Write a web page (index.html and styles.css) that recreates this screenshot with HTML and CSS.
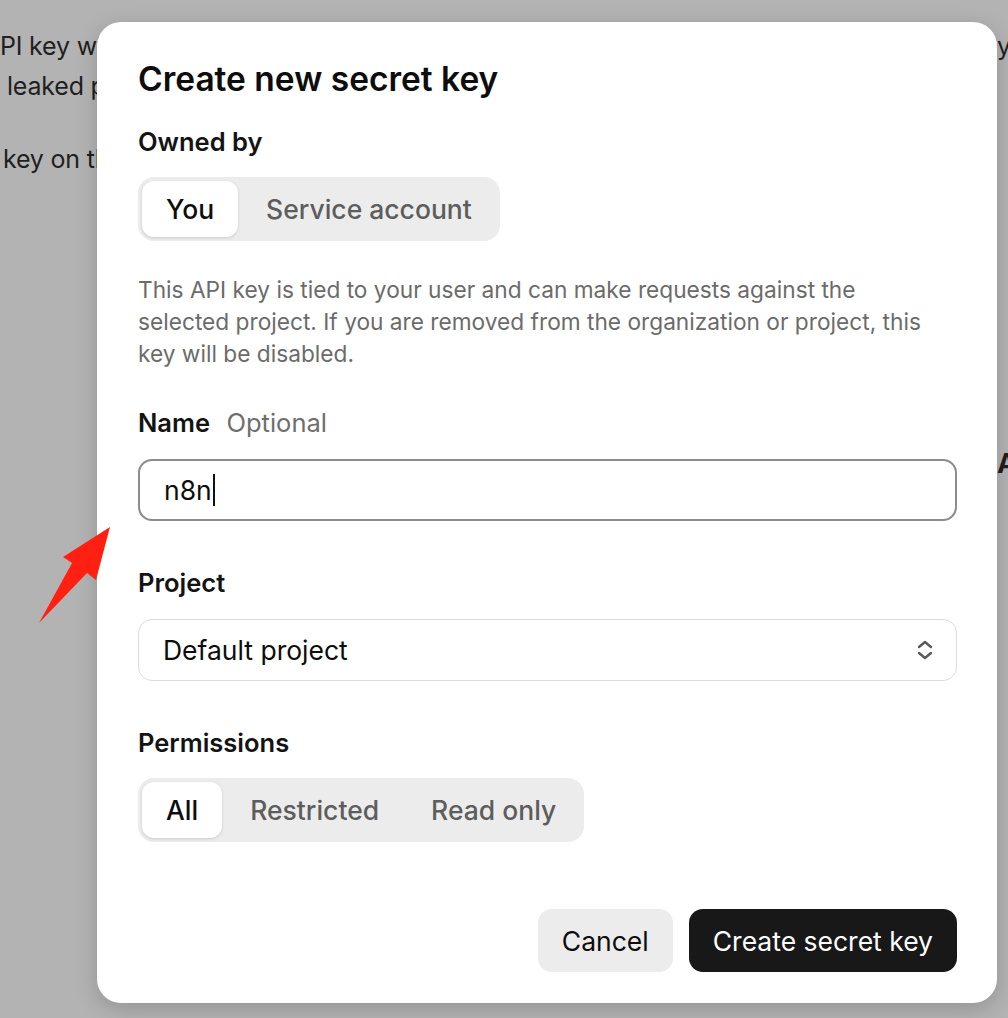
FILE: index.html
```html
<!DOCTYPE html>
<html lang="en">
<head>
    <meta charset="UTF-8">
    <meta name="viewport" content="width=device-width, initial-scale=1.0">
    <title>Create new secret key</title>
    <link rel="stylesheet" href="styles.css">
</head>
<body>
    <div class="page">
        <div class="page-left">
            <p>PI key will be shown only once</p>
            <p class="indent">leaked please revoke it</p>
            <p class="gap indent-sm">key on this page</p>
        </div>
        <div class="page-right">
            <p>y</p>
            <p class="heading">A</p>
        </div>
    </div>

    <div class="modal">
        <h2>Create new secret key</h2>

        <div class="label first">Owned by</div>
        <div class="segment">
            <button class="active">You</button>
            <button>Service account</button>
        </div>

        <p class="hint">This API key is tied to your user and can make requests against the selected project. If you are removed from the organization or project, this key will be disabled.</p>

        <div class="label name">Name <span>Optional</span></div>
        <div class="input"><span>n8n</span><i class="caret"></i></div>

        <div class="label field">Project</div>
        <div class="select">
            <span>Default project</span>
            <svg width="18" height="22" viewBox="0 0 18 22">
                <path d="M3 8 L9 3 L15 8 M3 14 L9 19 L15 14" fill="none" stroke="#5a5a5a" stroke-width="2.4" stroke-linecap="round" stroke-linejoin="round"/>
            </svg>
        </div>

        <div class="label field">Permissions</div>
        <div class="segment">
            <button class="active">All</button>
            <button>Restricted</button>
            <button>Read only</button>
        </div>

        <div class="actions">
            <button class="cancel">Cancel</button>
            <button class="create">Create secret key</button>
        </div>
    </div>

    <svg class="arrow" width="120" height="100" viewBox="0 0 120 100">
        <polygon points="39,96 72,36 63,30 110,0 96,53 87,46" fill="#ff2012"/>
    </svg>
</body>
</html>
```

FILE: styles.css
```css
body {
    margin: 0;
    font-family: Inter, "Noto Sans", sans-serif;
    background: #b3b3b3;
    color: #1a1a1a;
    height: 1018px;
    overflow: hidden;
}
.page {
    display: flex;
    justify-content: space-between;
    padding-top: 26px;
}
.page p {
    margin: 0;
    font-size: 25px;
    line-height: 40px;
    white-space: nowrap;
    color: #1f1f1f;
    letter-spacing: -0.2px;
}
.page-left .indent {
    padding-left: 7px;
}
.page-left .indent-sm {
    padding-left: 3px;
}
.page-left .gap {
    margin-top: 33px;
}
.page-right {
    width: 11px;
    overflow: hidden;
}
.page-right .heading {
    margin-top: 378px;
    font-weight: 700;
    font-size: 27px;
}
.arrow {
    position: absolute;
    left: 0;
    top: 527px;
}
.modal {
    position: absolute;
    left: 97px;
    top: 22px;
    width: 900px;
    height: 981px;
    box-sizing: border-box;
    padding: 39px 40px 32px 41px;
    background: #fff;
    border-radius: 24px;
    box-shadow: 0 6px 22px rgba(0, 0, 0, 0.18);
}
h2 {
    margin: 0;
    font-size: 33.5px;
    line-height: 36px;
    font-weight: 600;
    color: #0d0d0d;
}
.label {
    font-size: 25.5px;
    line-height: 32px;
    font-weight: 600;
    color: #141414;
}
.label span {
    font-weight: 400;
    color: #6e6e6e;
    margin-left: 10px;
}
.label.first {
    margin-top: 29px;
}
.label.name {
    margin-top: 37px;
}
.label.field {
    margin-top: 46px;
}
.segment {
    display: inline-flex;
    margin-top: 19px;
    padding: 4px;
    background: #ececec;
    border-radius: 16px;
    gap: 4px;
}
.segment button {
    height: 56px;
    padding: 0 24px;
    border: none;
    border-radius: 12px;
    background: transparent;
    font-family: inherit;
    font-size: 26.5px;
    font-weight: 500;
    color: #5d5d5d;
}
.segment button.active {
    background: #fff;
    color: #0d0d0d;
    box-shadow: 0 1px 3px rgba(0, 0, 0, 0.15);
}
.hint {
    max-width: 800px;
    margin: 33px 0 0;
    font-size: 22.7px;
    line-height: 32px;
    color: #6b6b6b;
}
.input, .select {
    display: flex;
    align-items: center;
    height: 62px;
    box-sizing: border-box;
    margin-top: 20px;
    padding: 0 24px;
    border-radius: 14px;
    font-size: 26.5px;
    color: #0d0d0d;
}
.input {
    border: 2px solid #8c8c8c;
}
.caret {
    display: inline-block;
    width: 2px;
    height: 32px;
    margin-left: 1px;
    background: #111;
}
.select {
    border: 1.5px solid #dcdcdc;
    justify-content: space-between;
    padding-right: 22px;
}
.actions {
    display: flex;
    justify-content: flex-end;
    gap: 16px;
    margin-top: 67px;
}
.actions button {
    height: 63px;
    border: none;
    border-radius: 14px;
    font-family: inherit;
    font-size: 26.5px;
    padding: 0 24px;
}
.cancel {
    background: #ececec;
    color: #0d0d0d;
}
.create {
    background: #181818;
    color: #fff;
}
```
